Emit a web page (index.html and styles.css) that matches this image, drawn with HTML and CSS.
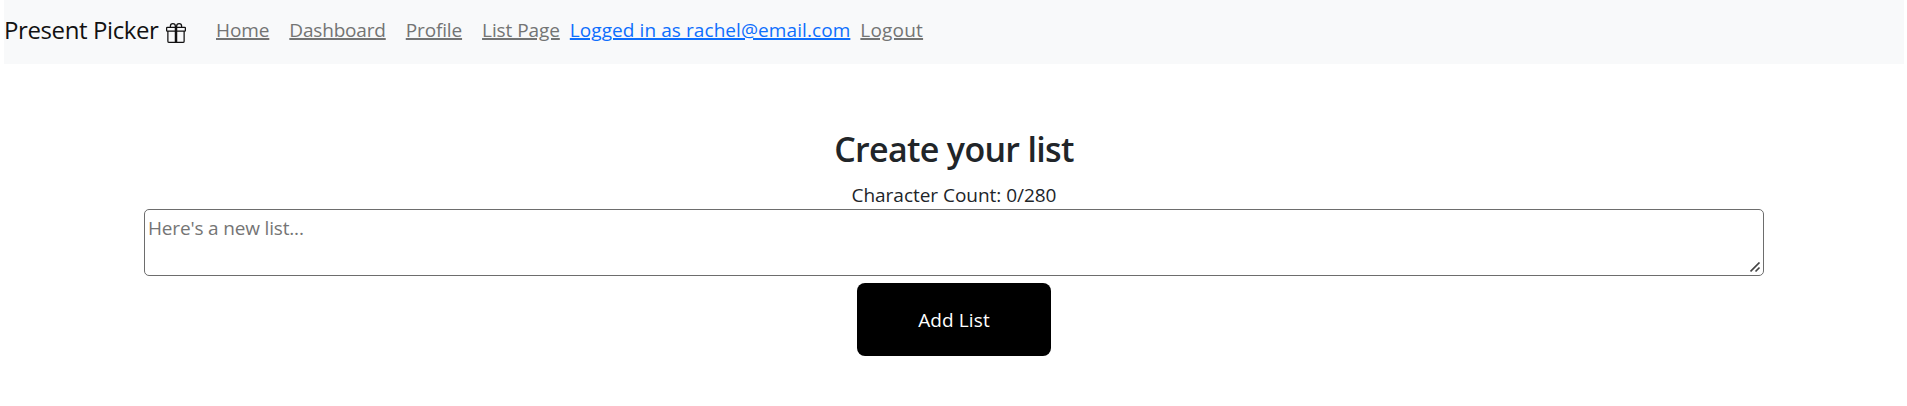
FILE: index.html
```html
<!DOCTYPE html>
<html lang="en">
<head>
<meta charset="utf-8">
<title>Present Picker</title>
<link rel="stylesheet" href="styles.css">
</head>
<body>
<nav class="navbar">
  <a class="brand" href="#"><span class="brand-name">Present Picker</span>
    <svg class="gift" viewBox="0 0 16 16" fill="currentColor"><path d="M3 2.500a2.500 2.500 0 0 1 5 0 2.500 2.500 0 0 1 5 0v.006c0 .07 0 .27-.038.494H15a1 1 0 0 1 1 1v2a1 1 0 0 1-1 1v7.500a1.500 1.500 0 0 1-1.500 1.500h-11A1.500 1.500 0 0 1 1 14.500V7a1 1 0 0 1-1-1V4a1 1 0 0 1 1-1h2.038A3 3 0 0 1 3 2.506zm1.068.5H7v-.5a1.500 1.500 0 1 0-3 0c0 .085.002.274.045.43zM9 3h2.932l.023-.07c.043-.156.045-.345.045-.43a1.500 1.500 0 0 0-3 0zM1 4v2h6V4zm8 0v2h6V4zm5 3H9v8h4.500a.5.500 0 0 0 .5-.5zm-7 8V7H2v7.500a.5.500 0 0 0 .5.500z"/></svg>
  </a>
  <div class="links">
    <a class="link home" href="#">Home</a>
    <a class="link dashboard" href="#">Dashboard</a>
    <a class="link profile" href="#">Profile</a>
    <a class="link list-page" href="#">List Page</a>
    <a class="link user" href="#">Logged in as rachel@email.com</a>
    <a class="link logout" href="#">Logout</a>
  </div>
</nav>
<main class="content">
  <h2 class="title">Create your list</h2>
  <p class="count">Character Count: 0/280</p>
  <div class="field">
    <textarea class="entry" placeholder="Here's a new list..."></textarea>
    <svg class="grip" viewBox="0 0 11 11" fill="none" stroke="#444" stroke-width="1.700"><path d="M.5 9.500 9.500.5M5.500 9.500l4-4"/></svg>
  </div>
  <button class="submit" type="button">Add List</button>
</main>
</body>
</html>
```
FILE: styles.css
```css
* { box-sizing: border-box; }
body {
  margin: 0 3px 0 4px;
  background: #fff;
  color: #212529;
  font: 400 19px/30px "Open Sans", "Noto Sans", sans-serif;
}
.navbar {
  display: flex;
  align-items: center;
  height: 64px;
  padding-bottom: 4px;
  background: #f8f9fa;
}
.brand {
  display: flex;
  align-items: center;
  width: 182px;
  justify-content: space-between;
  font-size: 24px;
  letter-spacing: -0.4px;
  color: #111;
  text-decoration: none;
}
.gift { width: 20px; height: 20px; margin-top: 6px; }
.links { display: flex; gap: 20px; margin-left: 30px; }
.link {
  color: #737474;
  text-decoration: underline;
  text-decoration-thickness: 2px;
}
.home { letter-spacing: -0.1px; }
.dashboard { letter-spacing: -0.18px; }
.profile { letter-spacing: -0.14px; }
.list-page { letter-spacing: -0.08px; }
.user { color: #0d6efd; margin: 0 -10px; letter-spacing: 0.08px; }
.logout { letter-spacing: 0.2px; }
.content {
  display: flex;
  flex-direction: column;
  align-items: center;
  padding-top: 64px;
}
.title {
  margin: 0 0 10px;
  font-size: 34px;
  font-weight: 600;
  line-height: 42px;
  letter-spacing: -0.68px;
}
.count { margin: 0 0 -1px; letter-spacing: -0.03px; }
.field { position: relative; display: flex; }
.entry {
  width: 1620px;
  height: 67px;
  padding: 3px;
  border: 1px solid #6d6d6d;
  border-radius: 5px;
  font: inherit;
  letter-spacing: -0.17px;
  resize: none;
}
.entry::placeholder { color: #757575; }
.grip { position: absolute; right: 3px; bottom: 3px; width: 11px; height: 11px; }
.submit {
  width: 194px;
  height: 73px;
  margin-top: 7px;
  padding-bottom: 1px;
  border: 0;
  border-radius: 8px;
  background: #000;
  color: #fff;
  font: inherit;
  letter-spacing: 0.1px;
}
```
